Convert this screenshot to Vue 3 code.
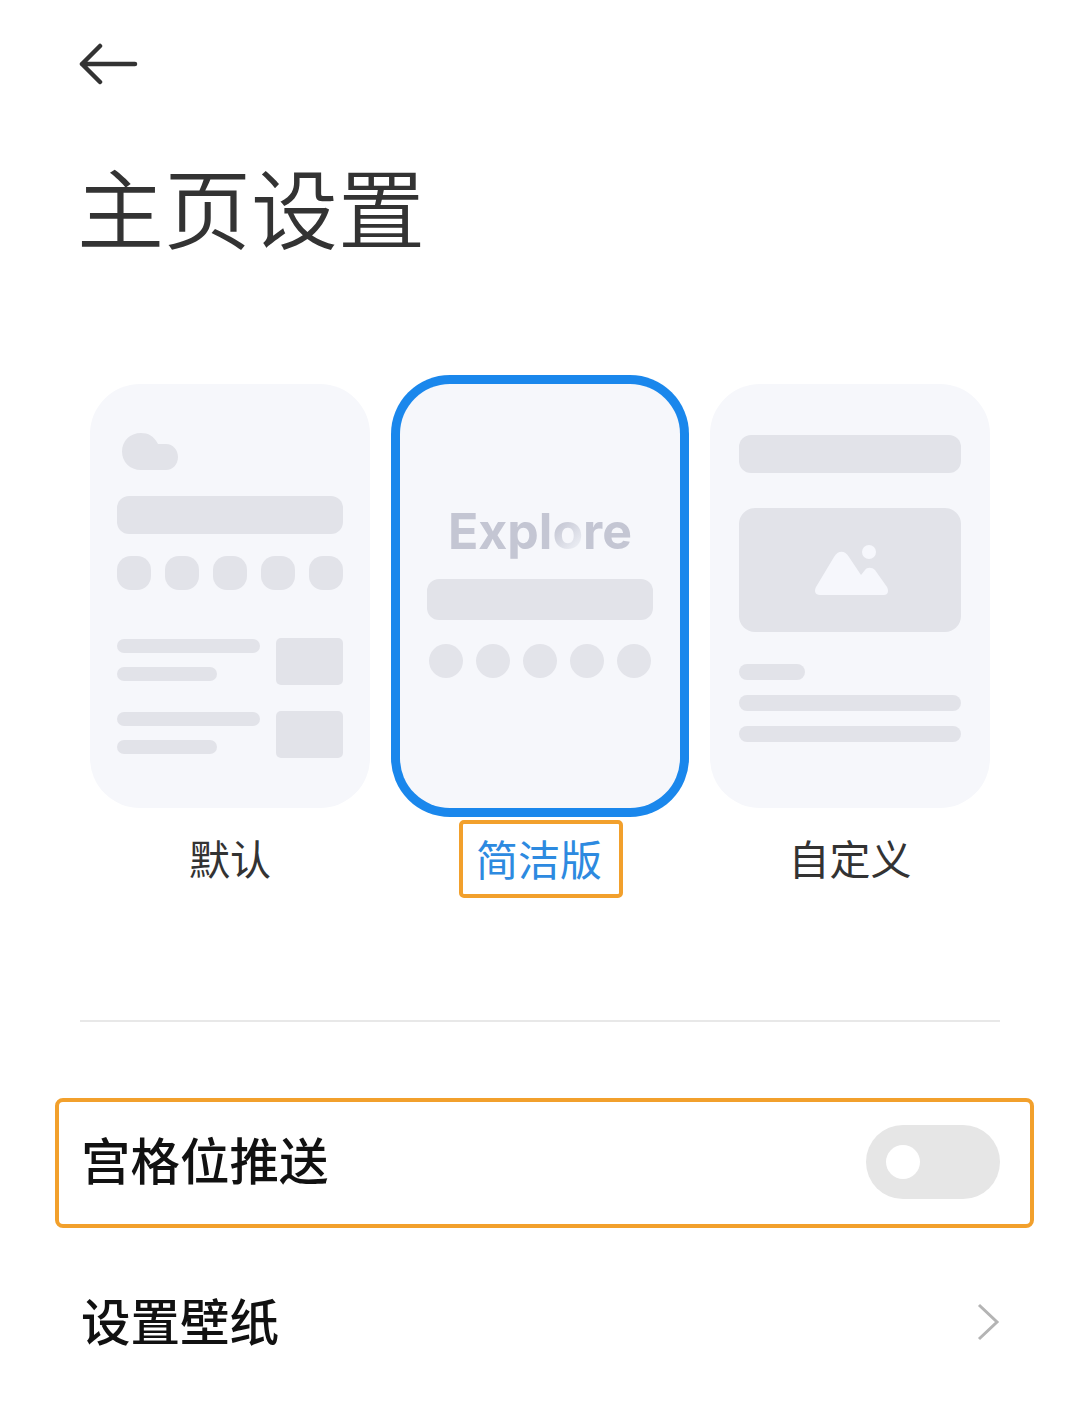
<script setup>
const squares = [1, 2, 3, 4, 5]
const dots = [1, 2, 3, 4, 5]
const articles = [1, 2]
</script>

<template>
  <div class="page">
    <button class="back" aria-label="back">
      <svg width="60" height="44" viewBox="0 0 60 44">
        <path d="M21 4 L3 22 L21 40 M3 22 H56" fill="none" stroke="#333" stroke-width="4.500" stroke-linecap="round" stroke-linejoin="round" />
      </svg>
    </button>

    <h1 class="title">主页设置</h1>

    <div class="modes">
      <!-- default -->
      <div class="mode">
        <div class="card card-default">
          <svg class="cloud" width="56" height="37" viewBox="0 0 56 37">
            <path d="M19 37 C8 37 0 29 0 18.500 C0 8 8 0 19 0 C26 0 32 3 36 11 L44 11 C51 11 56 17 56 24 C56 31 51 37 44 37 Z" fill="#e2e3e9" />
          </svg>
          <div class="bar"></div>
          <div class="icon-row">
            <span v-for="s in squares" :key="s" class="squircle"></span>
          </div>
          <div v-for="a in articles" :key="a" class="article">
            <div class="article-lines">
              <div class="line line-long"></div>
              <div class="line line-short"></div>
            </div>
            <div class="thumb"></div>
          </div>
        </div>
        <div class="label"><span>默认</span></div>
      </div>

      <!-- simple, selected -->
      <div class="mode">
        <div class="card card-simple">
          <div class="explore">Expl<span class="fade-o">o</span>re</div>
          <div class="bar bar-simple"></div>
          <div class="dot-row">
            <span v-for="d in dots" :key="d" class="dot"></span>
          </div>
        </div>
        <div class="label label-active"><span>简洁版</span></div>
      </div>

      <!-- custom -->
      <div class="mode">
        <div class="card card-custom">
          <div class="bar bar-custom"></div>
          <div class="banner">
            <svg width="80" height="52" viewBox="0 0 80 52">
              <circle cx="57" cy="8" r="7" fill="#f6f7fc" />
              <path d="M8 51 C3 51 2 47 4 43 L22 13 C26 6 33 6 37 13 L49 31 L53 26 C55 23 60 23 63 26 L75 43 C77 47 76 51 72 51 Z" fill="#f6f7fc" />
            </svg>
          </div>
          <div class="line line-tag"></div>
          <div class="line line-wide"></div>
          <div class="line line-wide"></div>
        </div>
        <div class="label"><span>自定义</span></div>
      </div>
    </div>

    <div class="divider"></div>

    <div class="row row-marked">
      <span class="row-text">宫格位推送</span>
      <span class="switch"><span class="knob"></span></span>
    </div>

    <div class="row row-plain">
      <span class="row-text">设置壁纸</span>
      <svg class="chevron" width="24" height="38" viewBox="0 0 24 38">
        <path d="M2 2 L20 19 L2 36" fill="none" stroke="#b4b4b4" stroke-width="3" />
      </svg>
    </div>
  </div>
</template>

<style>
html,
body {
  margin: 0;
  background: #fff;
}
</style>

<style scoped>
.page {
  width: 1080px;
  height: 1415px;
  overflow: hidden;
  box-sizing: border-box;
  padding-top: 42px;
  background: #fff;
  font-family: "Noto Sans CJK SC", "Noto Sans", sans-serif;
  color: #333;
}

.back {
  display: block;
  margin: 0 0 0 79px;
  padding: 0;
  height: 44px;
  border: none;
  background: none;
}

.title {
  margin: 57px 0 0 77px;
  font-size: 87px;
  font-weight: 350;
  line-height: 124px;
  color: #333;
}

.modes {
  display: flex;
  gap: 30px;
  margin-top: 117px;
  padding: 0 90px;
}

.mode {
  width: 280px;
  display: flex;
  flex-direction: column;
  align-items: center;
}

.card {
  width: 280px;
  height: 424px;
  box-sizing: border-box;
  border-radius: 50px;
  background: #f6f7fb;
  display: flex;
  flex-direction: column;
}

.card-default {
  padding: 49px 27px 0;
}

.cloud {
  margin-left: 5px;
}

.bar {
  height: 38px;
  border-radius: 12px;
  background: #e2e3e9;
  flex: none;
}

.card-default .bar {
  margin-top: 26px;
}

.icon-row {
  display: flex;
  justify-content: space-between;
  margin-top: 22px;
  margin-bottom: 48px;
}

.squircle {
  width: 34px;
  height: 34px;
  border-radius: 14px;
  background: #e2e3e9;
}

.article {
  display: flex;
  justify-content: space-between;
  margin-bottom: 26px;
}

.article-lines {
  display: flex;
  flex-direction: column;
  gap: 14px;
  padding-top: 1px;
}

.line {
  height: 14px;
  border-radius: 7px;
  background: #e2e3e9;
}

.line-long {
  width: 143px;
}

.line-short {
  width: 100px;
}

.thumb {
  width: 67px;
  height: 47px;
  border-radius: 5px;
  background: #e2e3e9;
}

.card-simple {
  align-items: center;
  padding: 118px 27px 0;
  box-shadow: 0 0 0 9px #1a87ec;
}

.explore {
  height: 70px;
  font-family: Inter, "Noto Sans", sans-serif;
  font-size: 50px;
  font-weight: 700;
  line-height: 58px;
  color: #c4c6d3;
}

.fade-o {
  background: linear-gradient(135deg, #c4c6d3 30%, #eceef4 80%);
  -webkit-background-clip: text;
  background-clip: text;
  color: transparent;
}

.bar-simple {
  width: 226px;
  height: 41px;
  margin-top: 7px;
}

.dot-row {
  width: 222px;
  display: flex;
  justify-content: space-between;
  margin-top: 24px;
}

.dot {
  width: 34px;
  height: 34px;
  border-radius: 50%;
  background: #e3e4ea;
}

.card-custom {
  padding: 51px 29px 0;
}

.banner {
  height: 124px;
  margin-top: 35px;
  margin-bottom: 32px;
  border-radius: 16px;
  background: #e2e3e9;
  display: flex;
  justify-content: center;
  padding-top: 36px;
  box-sizing: border-box;
}

.banner svg {
  display: block;
  margin-left: 4px;
}

.line-tag {
  width: 66px;
  height: 16px;
  border-radius: 8px;
}

.line-wide {
  height: 16px;
  border-radius: 8px;
  margin-top: 15px;
}

.label {
  height: 78px;
  margin-top: 12px;
  display: flex;
  align-items: center;
  justify-content: center;
  font-size: 41px;
  color: #333;
}

.label span {
  margin-bottom: 4px;
}

.label-active {
  width: 164px;
  box-sizing: border-box;
  margin-left: 2px;
  border: 4px solid #f2a02c;
  border-radius: 5px;
  font-size: 42px;
  color: #2d8ae0;
}

.label-active span {
  margin-right: 4px;
}

.divider {
  height: 2px;
  margin: 122px 80px 0;
  background: #e8e8e8;
}

.row {
  display: flex;
  align-items: center;
  justify-content: space-between;
  width: 979px;
  height: 130px;
  box-sizing: border-box;
  margin-left: 55px;
  padding: 0 30px 0 26px;
  margin-top: 29px;
}

.row-marked {
  margin-top: 76px;
  padding: 0 30px 0 22px;
  border: 4px solid #f2a02c;
  border-radius: 8px;
}

.row-text {
  font-size: 49.500px;
  font-weight: 500;
  color: #111;
  margin-bottom: 9px;
}

.row-plain .row-text {
  margin-bottom: 5px;
}

.switch {
  width: 134px;
  height: 74px;
  margin-bottom: 2px;
  border-radius: 37px;
  background: #e6e6e6;
  display: flex;
  align-items: center;
  padding-left: 20px;
  box-sizing: border-box;
}

.knob {
  width: 34px;
  height: 34px;
  border-radius: 50%;
  background: #fff;
}

.chevron {
  margin-right: 3px;
}
</style>
